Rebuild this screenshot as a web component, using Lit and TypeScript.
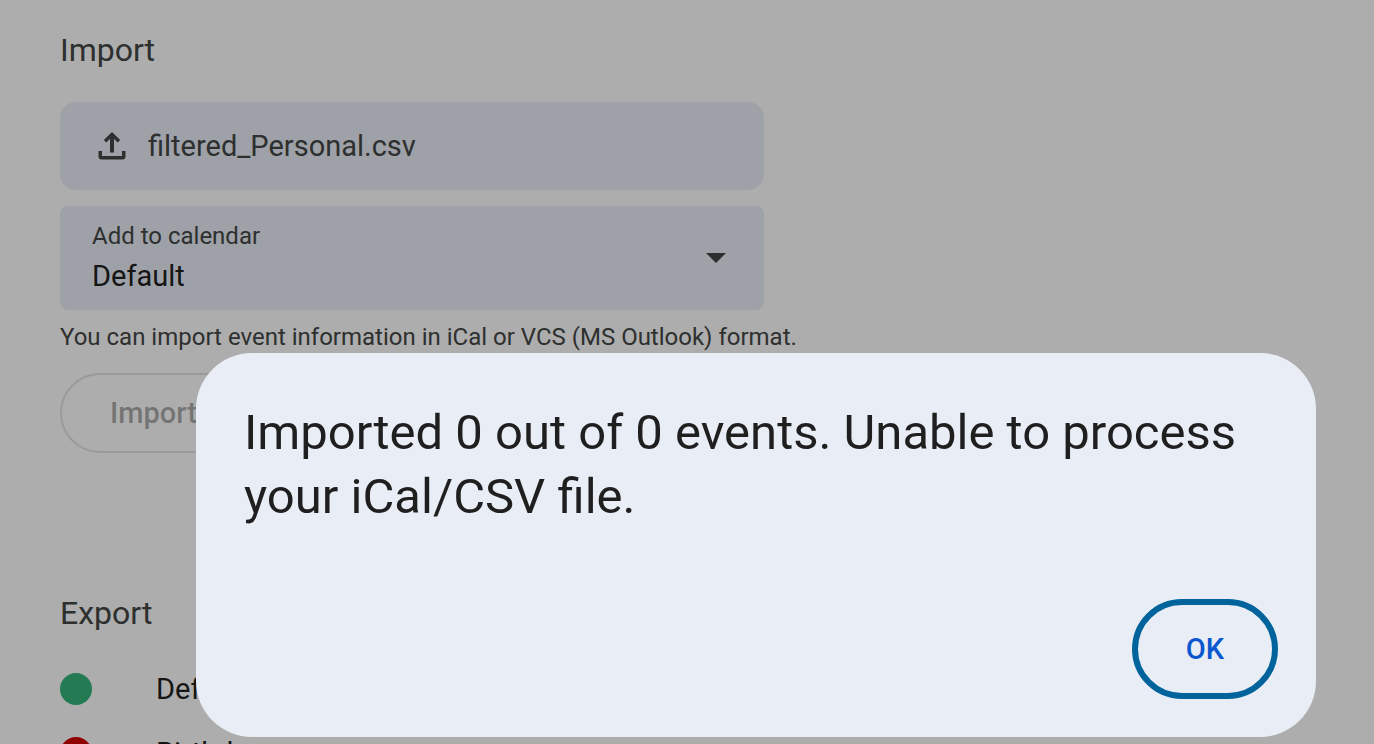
import { LitElement, html, css } from "lit";
import { customElement, state } from "lit/decorators.js";

interface Calendar {
  name: string;
  tone: string;
}

@customElement("app-root")
export class AppRoot extends LitElement {
  @state() private dialogOpen = true;
  @state() private calendars: Calendar[] = [
    { name: "Default", tone: "green" },
    { name: "Birthdays", tone: "red" },
  ];

  static styles = css`
    :host {
      display: block;
      position: relative;
      height: 100vh;
      overflow: hidden;
      background: #fff;
      color: #1f1f1f;
      font-family: Roboto, "Liberation Sans", sans-serif;
      font-size: 29px;
      line-height: 40px;
    }
    * {
      box-sizing: border-box;
    }
    button,
    select {
      font: inherit;
      margin: 0;
    }
    .page {
      padding: 30px 60px;
    }
    .heading {
      margin: 0;
      font-size: 32px;
      line-height: 40px;
      font-weight: 400;
      color: #444746;
    }
    .form {
      display: flex;
      flex-direction: column;
      align-items: flex-start;
      margin-top: 32px;
    }
    .file {
      display: flex;
      align-items: center;
      gap: 16px;
      width: 100%;
      max-width: 704px;
      min-height: 88px;
      padding: 0 32px;
      border: 0;
      border-radius: 16px;
      background: #e9eef6;
      color: #444746;
      text-align: left;
    }
    .icon {
      width: 40px;
      height: 40px;
      fill: currentColor;
    }
    .field {
      display: grid;
      grid-template-columns: 1fr auto;
      align-items: center;
      width: 100%;
      max-width: 704px;
      margin-top: 16px;
      padding: 12px 28px 12px 32px;
      border-radius: 8px;
      background: #e9eef6;
    }
    .label {
      grid-column: 1;
      font-size: 24px;
      line-height: 36px;
      color: #444746;
    }
    .select {
      grid-column: 1;
      appearance: none;
      width: 100%;
      height: 44px;
      padding: 0;
      border: 0;
      background: none;
      color: #1f1f1f;
    }
    .arrow {
      grid-column: 2;
      grid-row: 1 / 3;
      color: #444746;
    }
    .hint {
      margin: 8px 0 0;
      font-size: 24px;
      line-height: 38px;
      color: #444746;
    }
    .import {
      height: 80px;
      margin-top: 17px;
      padding: 0 48px;
      border: 2px solid rgba(31, 31, 31, 0.12);
      border-radius: 40px;
      background: none;
      color: rgba(31, 31, 31, 0.38);
      font-weight: 500;
    }
    .export {
      margin-top: 140px;
    }
    .list {
      display: flex;
      flex-direction: column;
      gap: 24px;
      margin: 36px 0 0;
      padding: 0;
      list-style: none;
    }
    .item {
      display: flex;
      align-items: center;
      gap: 64px;
    }
    .dot {
      width: 32px;
      height: 32px;
      border-radius: 50%;
    }
    .green {
      background: #33b679;
    }
    .red {
      background: #d50000;
    }
    .scrim {
      position: absolute;
      inset: 0;
      display: flex;
      align-items: flex-end;
      justify-content: flex-end;
      padding: 7px 58px;
      background: rgba(0, 0, 0, 0.32);
    }
    .dialog {
      display: flex;
      flex-direction: column;
      gap: 70px;
      width: 100%;
      max-width: 1120px;
      padding: 48px 38px 38px 48px;
      border-radius: 56px;
      background: #e9eef6;
    }
    .message {
      margin: 0;
      font-size: 49px;
      line-height: 64px;
      font-weight: 400;
    }
    .ok {
      align-self: flex-end;
      height: 100px;
      padding: 0 48px;
      border: 6px solid #00639b;
      border-radius: 50px;
      background: none;
      color: #0b57d0;
      font-weight: 500;
    }
    .ok:focus {
      outline: none;
    }
  `;

  private close() {
    this.dialogOpen = false;
  }

  render() {
    return html`
      <main class="page">
        <section>
          <h2 class="heading">Import</h2>
          <div class="form">
            <button class="file" type="button">
              <svg class="icon" viewBox="0 0 40 40" aria-hidden="true">
                <path
                  d="M18 26.5V12.8L14.3 16.4L11.8 13.9L20 6L28.2 13.9L25.7 16.4L22 12.8V26.5ZM9.5 33.5Q6.5 33.5 6.5 30.5V25H10V30H30V25H33.5V30.5Q33.5 33.5 30.5 33.5Z"
                />
              </svg>
              <span>filtered_Personal.csv</span>
            </button>
            <div class="field">
              <label class="label" for="calendar">Add to calendar</label>
              <select class="select" id="calendar">
                ${this.calendars.map((c) => html`<option>${c.name}</option>`)}
              </select>
              <svg class="icon arrow" viewBox="0 0 20 20" aria-hidden="true">
                <path d="M5 7.5H15L10 12.5Z" />
              </svg>
            </div>
            <p class="hint">
              You can import event information in iCal or VCS (MS Outlook)
              format.
            </p>
            <button class="import" type="button" disabled>Import</button>
          </div>
        </section>
        <section class="export">
          <h2 class="heading">Export</h2>
          <ul class="list">
            ${this.calendars.map(
              (c) => html`<li class="item">
                <span class="dot ${c.tone}"></span><span>${c.name}</span>
              </li>`
            )}
          </ul>
        </section>
      </main>
      ${this.dialogOpen
        ? html`<div class="scrim">
            <div class="dialog" role="alertdialog" aria-modal="true" aria-labelledby="message">
              <h1 class="message" id="message">
                Imported 0 out of 0 events. Unable to process your iCal/CSV
                file.
              </h1>
              <button class="ok" type="button" @click=${this.close}>OK</button>
            </div>
          </div>`
        : null}
    `;
  }
}
